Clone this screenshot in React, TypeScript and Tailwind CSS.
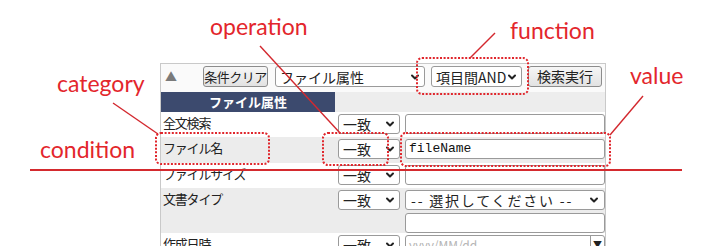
import { ChevronDown } from "lucide-react";

const jp = "font-['Noto_Sans_CJK_JP',sans-serif]";

function Select({ label, width, className = "" }: { label: string; width: string; className?: string }) {
    return (
        <div
            className={`${width} h-[20px] flex items-center justify-between bg-white border border-[#9a9a9a] rounded-[3px] pl-[4px] pr-[3px] ${className}`}
        >
            <span className="flex-1 min-w-0 text-[14px] leading-[18px] text-[#222] whitespace-nowrap overflow-hidden">{label}</span>
            <ChevronDown size={12} strokeWidth={4} className="shrink-0 text-[#222]" />
        </div>
    );
}

function Button({ label, width, wide = false }: { label: string; width: string; wide?: boolean }) {
    return (
        <div
            className={`${width} h-[21px] flex items-center justify-center bg-gradient-to-b from-[#f6f6f6] to-[#e2e2e2] border border-[#8c8c8c] rounded-[3px] leading-[19px] whitespace-nowrap text-[#222] ${wide ? "text-[14px]" : "text-[13px] tracking-[-0.5px]"}`}
        >
            {label}
        </div>
    );
}

function TextBox({ children, className = "" }: { children?: React.ReactNode; className?: string }) {
    return (
        <div className={`w-[200px] h-[20px] flex items-center bg-white border border-[#9a9a9a] rounded-[3px] px-[3px] ${className}`}>
            {children}
        </div>
    );
}

type Row = { label: string; height: string; grey: boolean; value: React.ReactNode };

const rows: Row[] = [
    { label: "全文検索", height: "h-[25px]", grey: false, value: <TextBox /> },
    {
        label: "ファイル名",
        height: "h-[26px]",
        grey: true,
        value: (
            <TextBox>
                <span className="font-['Liberation_Mono',monospace] text-[13px] leading-[18px] text-[#111]">fileName</span>
            </TextBox>
        ),
    },
    { label: "ファイルサイズ", height: "h-[25px]", grey: false, value: <TextBox /> },
    {
        label: "文書タイプ",
        height: "h-[45px]",
        grey: true,
        value: (
            <div className="flex flex-col gap-[3px]">
                <div className="w-[200px] h-[20px] flex items-center justify-between bg-white border border-[#9a9a9a] rounded-[3px] pl-[5px] pr-[4px]">
                    <span className="text-[14px] leading-[18px] tracking-[1.8px] text-[#222] whitespace-nowrap">
                        -- 選択してください --
                    </span>
                    <ChevronDown size={12} strokeWidth={4} className="shrink-0 text-[#222]" />
                </div>
                <TextBox />
            </div>
        ),
    },
    {
        label: "作成日時",
        height: "h-[30px]",
        grey: false,
        value: (
            <div className="w-[200px] h-[20px] flex bg-white border border-[#9a9a9a] rounded-[3px]">
                <span className="flex-1 pl-[3px] text-[12px] leading-[18px] text-[#b5b5b5]">yyyy/MM/dd</span>
                <span className="w-[14px] border-l border-[#9a9a9a] text-[9px] leading-[18px] text-center text-[#222]">▼</span>
            </div>
        ),
    },
];

function SearchPanel() {
    return (
        <div className={`w-[446px] border-x border-t border-[#c9c9c9] ${jp}`}>
            <div className="h-[28px] flex items-start pt-[2px] bg-[#fafafa]">
                <span className="ml-[4px] w-[14px] text-[12px] leading-[21px] text-[#7a7a7a]">▲</span>
                <div className="ml-[24px]">
                    <Button label="条件クリア" width="w-[65px]" />
                </div>
                <Select label="ファイル属性" width="w-[150px]" className="ml-[7px] h-[21px]" />
                <Select label="項目間AND" width="w-[91px]" className="ml-[6px] h-[21px]" />
                <div className="ml-[6px]">
                    <Button label="検索実行" width="w-[74px]" wide />
                </div>
            </div>
            <div className="h-[20px] flex bg-[#ededed]">
                <div className="w-[174px] bg-[#3c4a6e] text-white font-bold text-[13px] leading-[20px] text-center">
                    ファイル属性
                </div>
            </div>
            {rows.map((row) => (
                <div key={row.label} className={`${row.height} flex items-start ${row.grey ? "bg-[#ececec]" : "bg-white"}`}>
                    <div className="w-[177px] pl-[2px] pt-[1px] text-[13px] leading-[20px] tracking-[-1.2px] text-[#222]">
                        {row.label}
                    </div>
                    <Select label="一致" width="w-[62px]" className="mt-[2px]" />
                    <div className="ml-[5px] mt-[2px]">{row.value}</div>
                </div>
            ))}
        </div>
    );
}

const notes = [
    { text: "operation", cls: "left-[210px] top-[15px]" },
    { text: "function", cls: "left-[510px] top-[19px]" },
    { text: "category", cls: "left-[57px] top-[72px]" },
    { text: "value", cls: "left-[630px] top-[64px]" },
    { text: "condition", cls: "left-[40px] top-[138px]" },
];

export default function App() {
    return (
        <div className="relative w-[706px] h-[246px] overflow-hidden bg-white">
            <div className="pl-[160px] pt-[63px]">
                <SearchPanel />
            </div>

            <svg className="absolute inset-0" width={706} height={246}>
                <g stroke="#d3282e" strokeWidth={1.4} fill="none">
                    <line x1={113} y1={103} x2={158} y2={134} />
                    <line x1={260} y1={46} x2={340} y2={133} />
                    <line x1={495} y1={33} x2={470} y2={58} />
                    <line x1={643} y1={96} x2={610} y2={135} />
                </g>
                <line x1={30} y1={170} x2={682} y2={170} stroke="#d42a2e" strokeWidth={2} />
                <g stroke="#e0262c" strokeWidth={2} strokeDasharray="2 1.6" fill="none">
                    <rect x={417} y={58} width={111} height={36} rx={5} />
                    <rect x={156} y={133} width={113} height={31} rx={5} />
                    <rect x={323} y={133} width={65} height={32} rx={5} />
                    <rect x={401} y={133} width={209} height={33} rx={5} />
                </g>
            </svg>

            {notes.map((n) => (
                <span
                    key={n.text}
                    className={`absolute ${n.cls} font-['Lato',sans-serif] text-[23px] leading-none text-[#e3262c]`}
                >
                    {n.text}
                </span>
            ))}
        </div>
    );
}
